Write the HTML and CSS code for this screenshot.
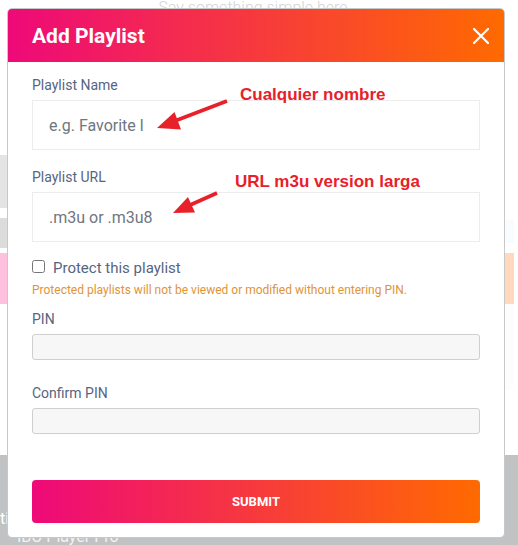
FILE: index.html
```html
<!DOCTYPE html>
<html lang="en">
<head>
<meta charset="utf-8">
<title>Add Playlist</title>
<link rel="stylesheet" href="styles.css">
</head>
<body>
<div class="page">
  <div class="hero"><p class="tagline">Say something simple here</p></div>
  <div class="strip strip-a"><span class="cell cell-a"></span></div>
  <div class="strip strip-b"><span class="cell cell-b"></span><span class="cell cell-b2"></span></div>
  <div class="strip strip-c"></div>
  <div class="strip strip-d"><span class="cell cell-d"></span></div>
  <div class="spacer"></div>
  <footer class="foot">
    <span class="foot-side">ti</span>
    <span class="foot-brand">IBO Player Pro</span>
  </footer>
</div>

<div class="modal">
  <div class="modal-head">
    <h2 class="modal-title">Add Playlist</h2>
    <svg class="close" width="16" height="16" viewBox="0 0 16 16"><path d="M1 1L15 15M15 1L1 15" stroke="#fff" stroke-width="2.2" stroke-linecap="square" fill="none"/></svg>
  </div>
  <form class="modal-body">
    <div class="group">
      <label class="label">Playlist Name</label>
      <input class="field" type="text" placeholder="e.g. Favorite l">
    </div>
    <div class="group group-next">
      <label class="label">Playlist URL</label>
      <input class="field" type="text" placeholder=".m3u or .m3u8">
    </div>
    <label class="check-row"><input class="check" type="checkbox"><span>Protect this playlist</span></label>
    <p class="warn">Protected playlists will not be viewed or modified without entering PIN.</p>
    <div class="group group-pin">
      <label class="label">PIN</label>
      <input class="pin" type="password">
    </div>
    <div class="group group-confirm">
      <label class="label">Confirm PIN</label>
      <input class="pin" type="password">
    </div>
    <button class="submit" type="button">SUBMIT</button>
  </form>
</div>

<svg class="notes" width="518" height="545" viewBox="0 0 518 545">
  <text class="note" x="240" y="100">Cualquier nombre</text>
  <text class="note" x="235" y="186.5">URL m3u version larga</text>
  <line x1="227" y1="101" x2="176" y2="120.5" stroke="#e8202a" stroke-width="3.6"/>
  <polygon points="157,128 181,129.5 174.5,112" fill="#e8202a"/>
  <line x1="217" y1="193" x2="189" y2="205.5" stroke="#e8202a" stroke-width="3.6"/>
  <polygon points="173,213 195,212.5 188,197" fill="#e8202a"/>
</svg>
</body>
</html>
```

FILE: styles.css
```css
* { box-sizing: border-box; }
html, body {
  margin: 0;
  padding: 0;
  width: 518px;
  height: 545px;
  overflow: hidden;
  background: #fff;
  font-family: Roboto, "Liberation Sans", sans-serif;
}
.page {
  display: flex;
  flex-direction: column;
  height: 545px;
}
.page > * { flex-shrink: 0; }
.hero { height: 155px; }
.tagline {
  margin: 0;
  font-size: 16px;
  line-height: 16px;
  font-weight: 300;
  color: #d4d4d4;
  text-align: center;
  padding-right: 12px;
}
.strip { display: flex; }
.strip-a { height: 53px; margin-bottom: 10px; }
.cell-a { width: 30px; background: #e4e4e4; }
.strip-b { height: 30px; margin-bottom: 5px; justify-content: space-between; }
.cell-b { width: 30px; background: #dcdcdd; }
.cell-b2 { width: 20px; height: 23px; margin-top: 2px; margin-right: 4px; background: #fafbfc; }
.strip-c {
  height: 51px;
  margin-right: 4px;
  background: linear-gradient(to right, #fdc1df, #ffd9bf);
}
.strip-d { height: 86px; justify-content: flex-end; }
.cell-d { width: 20px; margin-right: 4px; background: #fdfdfe; }
.spacer { height: 65px; }
.foot {
  flex: 1 1 0;
  min-height: 0;
  overflow: hidden;
  background: #c1c2c4;
  display: flex;
  flex-direction: column;
  padding-top: 55px;
  color: #fff;
}
.foot-side { font-size: 16px; line-height: 18px; flex-shrink: 0; }
.foot-brand { font-size: 16px; line-height: 18px; padding-left: 17px; margin-top: 0; opacity: 0.8; flex-shrink: 0; }

.modal {
  position: absolute;
  top: 8px;
  left: 7px;
  width: 498px;
  background: #fff;
  border: 1px solid #c8c8c8;
  border-radius: 5px;
  overflow: hidden;
}
.modal-head {
  height: 53px;
  display: flex;
  align-items: center;
  justify-content: space-between;
  padding: 0 15px 0 24px;
  background: linear-gradient(to right, #ee0979, #ff6a00);
}
.modal-title {
  margin: 0;
  color: #fff;
  font-size: 21px;
  font-weight: 700;
  line-height: 24px;
}
.close { display: block; }
.modal-body {
  display: flex;
  flex-direction: column;
  padding: 13px 24px 14px;
}
.group { display: flex; flex-direction: column; }
.group-next { margin-top: 17px; }
.group-pin { margin-top: 11px; }
.group-confirm { margin-top: 23px; }
.label {
  font-size: 14px;
  line-height: 20px;
  color: #56657f;
  margin-bottom: 5px;
}
.field {
  height: 50px;
  border: 1px solid #ececec;
  border-radius: 0;
  padding: 0 16px;
  font-family: Roboto, "Liberation Sans", sans-serif;
  font-size: 16px;
  background: #fff;
  outline: none;
}
.field::placeholder { color: #6f7681; }
.check-row {
  display: flex;
  align-items: flex-start;
  margin-top: 16px;
  font-size: 15px;
  line-height: 20px;
  color: #56657f;
}
.check {
  width: 13px;
  height: 13px;
  margin: 2px 8px 0 0;
}
.warn {
  margin: 4px 0 0;
  font-size: 12px;
  line-height: 16px;
  color: #df9436;
}
.pin {
  height: 26px;
  border: 1px solid #cfcfcf;
  border-radius: 3px;
  background: #f7f7f7;
  outline: none;
}
.submit {
  margin-top: 46px;
  height: 43px;
  border: 0;
  border-radius: 4px;
  background: linear-gradient(to right, #ee0979, #ff6a00);
  color: #fff;
  font-family: Roboto, "Liberation Sans", sans-serif;
  font-size: 13px;
  font-weight: 700;
}
.notes {
  position: absolute;
  top: 0;
  left: 0;
  pointer-events: none;
}
.note {
  font-family: "Liberation Sans", Arial, sans-serif;
  font-weight: 700;
  font-size: 17px;
  fill: #e8202a;
}
```
